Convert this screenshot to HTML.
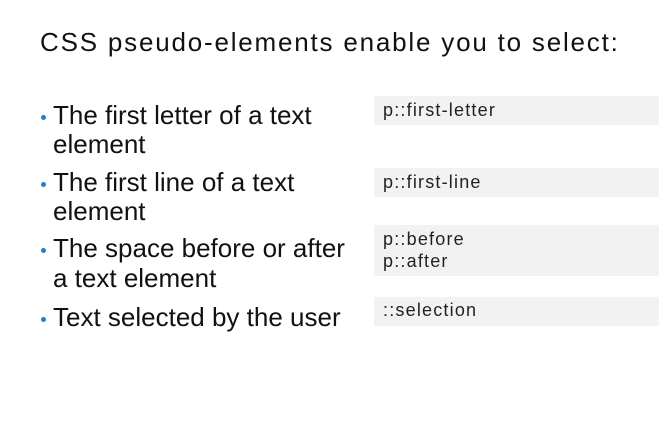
<!DOCTYPE html>
<html><head><meta charset="utf-8"><style>
html,body{margin:0;padding:0;background:#fff;width:670px;height:447px;overflow:hidden;position:relative}
.t{position:absolute;font-family:"Liberation Sans",sans-serif;color:#111;line-height:1;white-space:nowrap}
.b{font-size:26px}
.h{font-size:26px;left:40px;letter-spacing:1.8px}
.dot{position:absolute;width:5px;height:5px;border-radius:50%;background:#1e7fd0}
.box{position:absolute;left:374px;width:285px;background:#f2f2f2}
.c{position:absolute;font-family:"Liberation Sans",sans-serif;font-size:18px;letter-spacing:1.2px;color:#222;left:383px;line-height:1;white-space:nowrap}
</style></head><body>
<div class="t h" style="top:29px">CSS pseudo-elements enable you to select:</div>

<div class="dot" style="left:41px;top:115px"></div>
<div class="t b" style="left:53px;top:102px">The first letter of a text</div>
<div class="t b" style="left:53px;top:131px">element</div>
<div class="dot" style="left:41px;top:182px"></div>
<div class="t b" style="left:53px;top:169px">The first line of a text</div>
<div class="t b" style="left:53px;top:198px">element</div>
<div class="dot" style="left:41px;top:248px"></div>
<div class="t b" style="left:53px;top:235px">The space before or after</div>
<div class="t b" style="left:53px;top:265px">a text element</div>
<div class="dot" style="left:41px;top:317px"></div>
<div class="t b" style="left:53px;top:304px">Text selected by the user</div>

<div class="box" style="top:96px;height:29px"></div>
<div class="c" style="top:101px">p::first-letter</div>
<div class="box" style="top:168px;height:29px"></div>
<div class="c" style="top:173px">p::first-line</div>
<div class="box" style="top:225px;height:51px"></div>
<div class="c" style="top:230px">p::before</div>
<div class="c" style="top:252px">p::after</div>
<div class="box" style="top:297px;height:29px"></div>
<div class="c" style="top:301px">::selection</div>
</body></html>
